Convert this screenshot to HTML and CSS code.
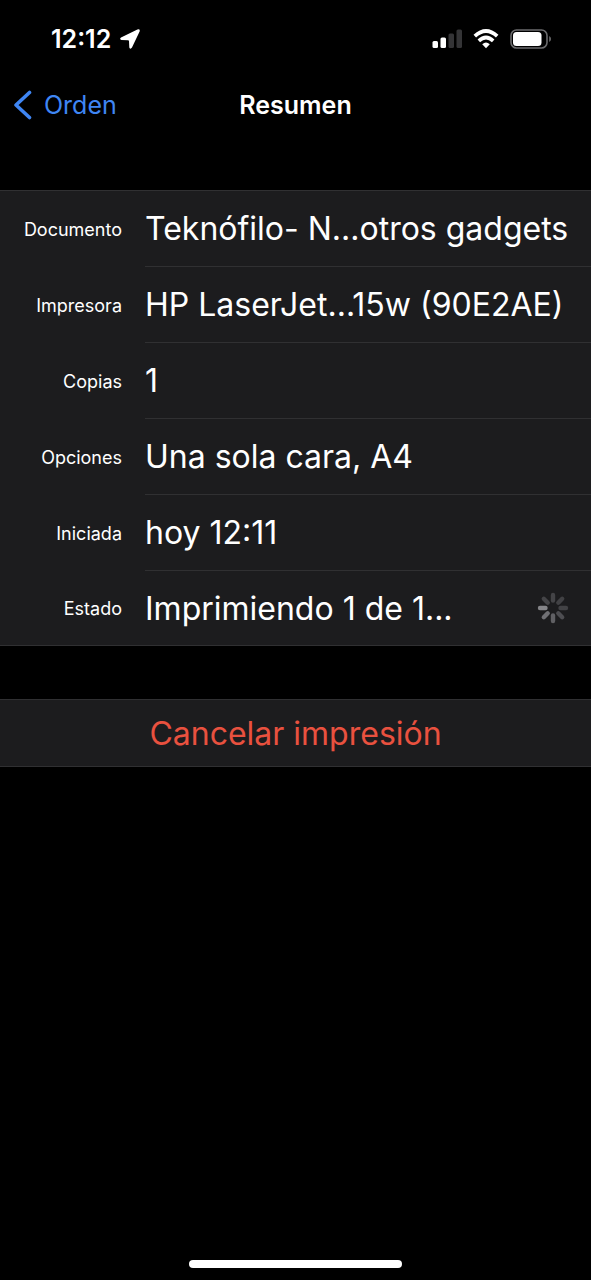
FILE: index.html
```html
<!DOCTYPE html>
<html lang="es">
<head>
<meta charset="utf-8">
<meta name="viewport" content="width=device-width, initial-scale=1">
<title>Resumen</title>
<link rel="stylesheet" href="styles.css">
</head>
<body>
<div class="screen">
  <div class="status">
    <div class="status-left">
      <span class="time">12:12</span>
      <svg class="location" viewBox="0 0 20 20" width="20" height="20" aria-hidden="true"><path d="M1 8.400 17.400.500Q20.400-.300 19.600 2.500L12 18.600Q10.300 20.800 9.300 18.400L9 12.200Q9 11.200 8 11.200L1.500 11Q-1 10 1 8.400Z" fill="#fff"/></svg>
    </div>
    <div class="status-right">
      <svg viewBox="0 0 30 20" width="30" height="20" aria-hidden="true"><g fill="#fff"><rect x="0.500" y="12" width="5.500" height="7" rx="1.500"/><rect x="8.500" y="8.500" width="5.500" height="10.500" rx="1.500"/></g><g fill="#343436"><rect x="16.500" y="4.500" width="5.500" height="14.500" rx="1.500"/><rect x="24.500" y="0.500" width="5.500" height="18.500" rx="1.500"/></g></svg>
      <svg viewBox="0 0 26 20" width="26" height="20" aria-hidden="true"><g fill="none" stroke="#fff" stroke-width="3.700"><path d="M1.800 7.200Q13-3.200 24.200 7.200"/><path d="M5.800 11.800Q13 5.200 20.200 11.800"/></g><path d="M9.200 15.200Q13 12 16.800 15.200L13 19.200Z" fill="#fff"/></svg>
      <svg viewBox="0 0 42 20" width="42" height="20" aria-hidden="true"><rect x="1" y="1" width="36" height="18" rx="5.500" fill="none" stroke="#6b6b6d" stroke-width="1.600"/><rect x="3" y="3" width="28.500" height="14" rx="3.500" fill="#fff"/><path d="M39.200 7V13Q41 12 41 10T39.200 7Z" fill="#6b6b6d"/></svg>
    </div>
  </div>
  <header class="nav">
    <button class="back" type="button">
      <svg viewBox="0 0 18 30" width="18" height="30" aria-hidden="true"><path d="M15.500 2.500 2 15 15.500 27.500" fill="none" stroke="#3f86f4" stroke-width="3.600" stroke-linecap="round" stroke-linejoin="round"/></svg>
      <span>Orden</span>
    </button>
    <h1 class="title">Resumen</h1>
  </header>
  <main>
    <dl class="details">
      <div class="row"><dt>Documento</dt><dd>Teknófilo- N...otros gadgets</dd></div>
      <div class="row"><dt>Impresora</dt><dd>HP LaserJet...15w (90E2AE)</dd></div>
      <div class="row"><dt>Copias</dt><dd>1</dd></div>
      <div class="row"><dt>Opciones</dt><dd>Una sola cara, A4</dd></div>
      <div class="row"><dt>Iniciada</dt><dd>hoy 12:11</dd></div>
      <div class="row"><dt>Estado</dt><dd><span>Imprimiendo 1 de 1...</span>
        <svg class="spinner" viewBox="-16 -16 32 32" width="32" height="32" aria-hidden="true"><g stroke-width="4.400" stroke-linecap="round"><path d="M0-7.500V-13" stroke="#444447"/><path d="M0-7.500V-13" stroke="#414144" transform="rotate(45)"/><path d="M0-7.500V-13" stroke="#424245" transform="rotate(90)"/><path d="M0-7.500V-13" stroke="#4d4d51" transform="rotate(135)"/><path d="M0-7.500V-13" stroke="#606064" transform="rotate(180)"/><path d="M0-7.500V-13" stroke="#707074" transform="rotate(225)"/><path d="M0-7.500V-13" stroke="#858589" transform="rotate(270)"/><path d="M0-7.500V-13" stroke="#444447" transform="rotate(315)"/></g></svg></dd></div>
    </dl>
    <button class="cancel" type="button">Cancelar impresión</button>
  </main>
  <div class="home"></div>
</div>
</body>
</html>
```
FILE: styles.css
```css
* {
  box-sizing: border-box;
}

body {
  margin: 0;
  background: #000;
  color: #fff;
  font-family: Inter, "Liberation Sans", sans-serif;
}

button {
  border: 0;
  background: none;
  font: inherit;
  cursor: pointer;
}

.screen {
  display: flex;
  flex-direction: column;
  min-height: 100vh;
}

.status {
  display: flex;
  justify-content: space-between;
  align-items: center;
  height: 78px;
  padding: 0 39px 0 51px;
}

.status-left {
  display: flex;
  align-items: center;
  gap: 9px;
}

.time {
  font-size: 25px;
  font-weight: 600;
}

.status-right {
  display: flex;
  align-items: center;
  gap: 11px;
}

.nav {
  display: grid;
  grid-template-columns: 1fr auto 1fr;
  align-items: center;
  height: 54px;
}

.back {
  display: flex;
  align-items: center;
  gap: 12px;
  padding: 0 0 0 14px;
  color: #3f86f4;
  font-size: 25px;
}

.title {
  margin: 0;
  font-size: 25px;
  font-weight: 600;
}

.details {
  margin: 58px 0 53px;
  border: solid #303032;
  border-width: 1px 0;
  background: #1c1c1e;
}

.row {
  display: grid;
  grid-template-columns: 122px 1fr;
  column-gap: 23px;
  align-items: center;
}

dt {
  font-size: 18px;
  text-align: right;
}

dd {
  display: flex;
  align-items: center;
  justify-content: space-between;
  height: 76px;
  margin: 0;
  padding-right: 22px;
  border-bottom: 1px solid #303032;
  font-size: 32px;
  white-space: nowrap;
}

.row:last-child dd {
  height: 74px;
  border-bottom: 0;
}

.cancel {
  display: block;
  width: 100%;
  height: 68px;
  padding: 0;
  border: solid #303032;
  border-width: 1px 0;
  background: #1c1c1e;
  color: #e9513f;
  font-size: 32px;
}

.home {
  width: 36%;
  height: 8px;
  margin: auto auto 12px;
  border-radius: 4px;
  background: #fff;
}
```
